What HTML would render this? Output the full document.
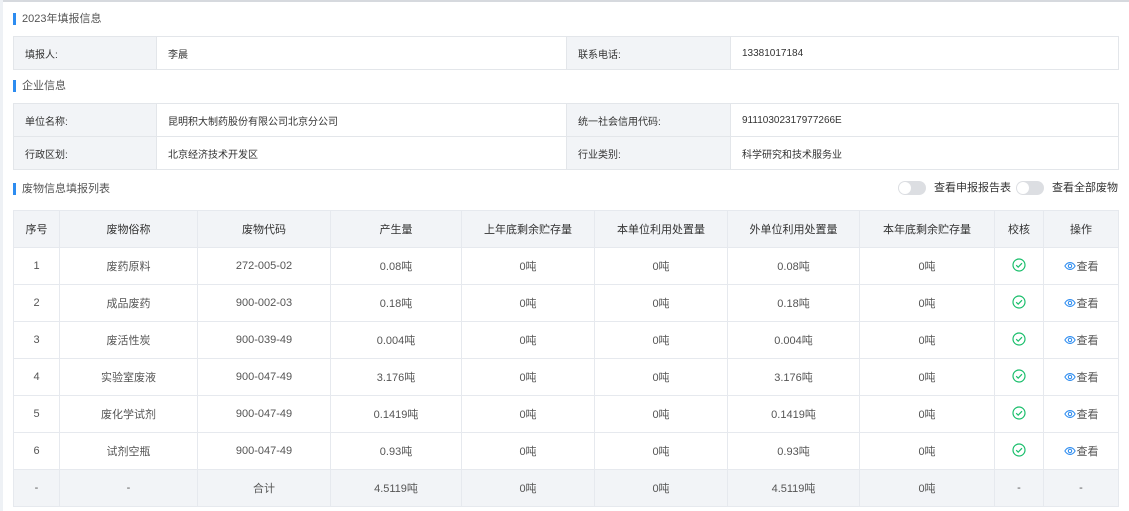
<!DOCTYPE html>
<html><head><meta charset="utf-8"><style>
*{margin:0;padding:0;box-sizing:border-box}
body{width:1129px;height:511px;background:#fff;font-family:"Liberation Sans","Noto Sans CJK SC",sans-serif;font-size:11px;color:#333;position:relative;overflow:hidden}
.topline{position:absolute;left:0;top:0;width:1129px;height:2px;background:#d6d9de}
.leftline{position:absolute;left:0;top:0;width:3px;height:511px;background:#eef1f5}
.title{position:absolute;left:13px;font-size:11px;color:#555;padding-left:9px;height:12px;line-height:12px}
.title:before{content:"";position:absolute;left:0;top:0;width:3px;height:12px;background:#2d8cf0}
table{border-collapse:collapse;position:absolute;left:13px;table-layout:fixed}
.info td{border:1px solid #e3e6ea;height:33px;padding-left:11px;font-size:10px;color:#333;vertical-align:middle}
.info td.l{background:#f2f4f7}
.grid tr{height:37px}
.grid td{border:1px solid #e6e9ee;text-align:center;vertical-align:middle;color:#555;font-size:11px;padding:0}
.grid tr.h td{background:#f2f4f7;color:#333}
.grid tr.t td{background:#f2f4f7}
.lk{color:#2d8cf0}
.lk svg{vertical-align:-2px;margin-right:1px}
.sw{position:absolute;top:181px;width:28px;height:14px;border-radius:7px;background:#dcdee2}
.sw:after{content:"";position:absolute;left:1px;top:1px;width:12px;height:12px;border-radius:50%;background:#fff}
.swl{position:absolute;top:181px;font-size:11px;color:#333;line-height:14px}
</style></head><body>
<div class="topline"></div><div class="leftline"></div>
<div class="title" style="top:13px">2023年填报信息</div>
<table class="info" style="top:36px;width:1106px">
<colgroup><col style="width:143px"><col style="width:410px"><col style="width:164px"><col></colgroup>
<tr><td class="l">填报人:</td><td>李晨</td><td class="l">联系电话:</td><td>13381017184</td></tr>
</table>
<div class="title" style="top:80px">企业信息</div>
<table class="info" style="top:103px;width:1106px">
<colgroup><col style="width:143px"><col style="width:410px"><col style="width:164px"><col></colgroup>
<tr><td class="l">单位名称:</td><td>昆明积大制药股份有限公司北京分公司</td><td class="l">统一社会信用代码:</td><td>91110302317977266E</td></tr>
<tr><td class="l">行政区划:</td><td>北京经济技术开发区</td><td class="l">行业类别:</td><td>科学研究和技术服务业</td></tr>
</table>
<div class="title" style="top:183px">废物信息填报列表</div>
<div class="sw" style="left:898px"></div><div class="swl" style="left:934px">查看申报报告表</div>
<div class="sw" style="left:1016px"></div><div class="swl" style="left:1052px">查看全部废物</div>
<svg width="0" height="0" style="position:absolute"><defs>
<symbol id="ok" viewBox="0 0 14 14"><circle cx="7" cy="7" r="6" fill="none" stroke="#19be6b" stroke-width="1.2"/><path d="M4.2 7.2l2 2 3.8-4" fill="none" stroke="#19be6b" stroke-width="1.2"/></symbol>
<symbol id="eye" viewBox="0 0 14 14"><path d="M1 7c1.6-2.6 3.6-4 6-4s4.4 1.4 6 4c-1.6 2.6-3.6 4-6 4s-4.4-1.4-6-4z" fill="none" stroke="#2d8cf0" stroke-width="1.2"/><circle cx="7" cy="7" r="2" fill="none" stroke="#2d8cf0" stroke-width="1.2"/></symbol>
</defs></svg>
<table class="grid" style="top:210px;width:1106px">
<colgroup><col style="width:46px"><col style="width:138px"><col style="width:133px"><col style="width:131px"><col style="width:133px"><col style="width:133px"><col style="width:132px"><col style="width:135px"><col style="width:49px"><col></colgroup>
<tr class="h"><td>序号</td><td>废物俗称</td><td>废物代码</td><td>产生量</td><td>上年底剩余贮存量</td><td>本单位利用处置量</td><td>外单位利用处置量</td><td>本年底剩余贮存量</td><td>校核</td><td>操作</td></tr>
<tr><td>1</td><td>废药原料</td><td>272-005-02</td><td>0.08吨</td><td>0吨</td><td>0吨</td><td>0.08吨</td><td>0吨</td><td><svg width="14" height="14"><use href="#ok"/></svg></td><td class="lk"><svg width="12" height="12"><use href="#eye"/></svg>查看</td></tr>
<tr><td>2</td><td>成品废药</td><td>900-002-03</td><td>0.18吨</td><td>0吨</td><td>0吨</td><td>0.18吨</td><td>0吨</td><td><svg width="14" height="14"><use href="#ok"/></svg></td><td class="lk"><svg width="12" height="12"><use href="#eye"/></svg>查看</td></tr>
<tr><td>3</td><td>废活性炭</td><td>900-039-49</td><td>0.004吨</td><td>0吨</td><td>0吨</td><td>0.004吨</td><td>0吨</td><td><svg width="14" height="14"><use href="#ok"/></svg></td><td class="lk"><svg width="12" height="12"><use href="#eye"/></svg>查看</td></tr>
<tr><td>4</td><td>实验室废液</td><td>900-047-49</td><td>3.176吨</td><td>0吨</td><td>0吨</td><td>3.176吨</td><td>0吨</td><td><svg width="14" height="14"><use href="#ok"/></svg></td><td class="lk"><svg width="12" height="12"><use href="#eye"/></svg>查看</td></tr>
<tr><td>5</td><td>废化学试剂</td><td>900-047-49</td><td>0.1419吨</td><td>0吨</td><td>0吨</td><td>0.1419吨</td><td>0吨</td><td><svg width="14" height="14"><use href="#ok"/></svg></td><td class="lk"><svg width="12" height="12"><use href="#eye"/></svg>查看</td></tr>
<tr><td>6</td><td>试剂空瓶</td><td>900-047-49</td><td>0.93吨</td><td>0吨</td><td>0吨</td><td>0.93吨</td><td>0吨</td><td><svg width="14" height="14"><use href="#ok"/></svg></td><td class="lk"><svg width="12" height="12"><use href="#eye"/></svg>查看</td></tr>
<tr class="t"><td>-</td><td>-</td><td>合计</td><td>4.5119吨</td><td>0吨</td><td>0吨</td><td>4.5119吨</td><td>0吨</td><td>-</td><td>-</td></tr>
</table>
</body></html>
